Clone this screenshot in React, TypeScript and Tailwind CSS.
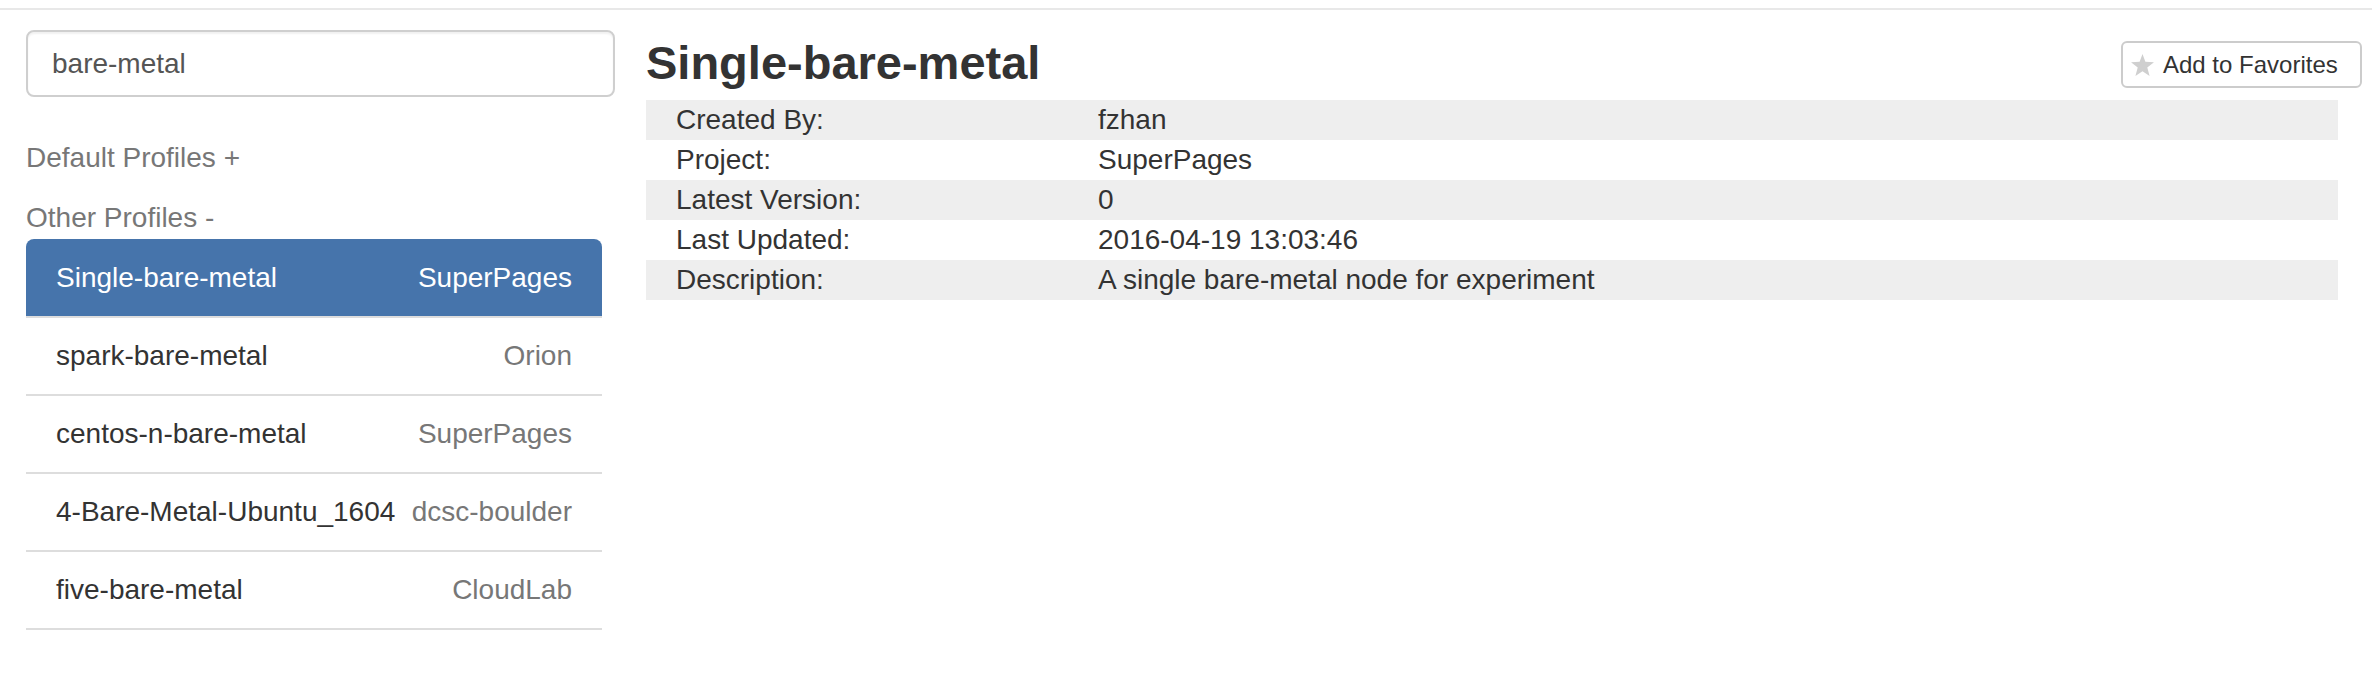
import React from "react";

const profiles = [
  { name: "Single-bare-metal", project: "SuperPages", active: true },
  { name: "spark-bare-metal", project: "Orion" },
  { name: "centos-n-bare-metal", project: "SuperPages" },
  { name: "4-Bare-Metal-Ubuntu_1604", project: "dcsc-boulder" },
  { name: "five-bare-metal", project: "CloudLab" },
];

const details = [
  ["Created By:", "fzhan"],
  ["Project:", "SuperPages"],
  ["Latest Version:", "0"],
  ["Last Updated:", "2016-04-19 13:03:46"],
  ["Description:", "A single bare-metal node for experiment"],
];

function Star() {
  return (
    <svg width="23" height="22" viewBox="0 0 24 23" className="shrink-0">
      <polygon
        points="12,0 15,8.2 24,8.6 17,14.2 19.4,23 12,18 4.6,23 7,14.2 0,8.6 9,8.2"
        fill="#cfcfcf"
      />
    </svg>
  );
}

export default function App() {
  return (
    <div className="min-h-[676px] w-full bg-white font-['Liberation_Sans',Arial,sans-serif] text-[#333]">
      <div className="h-[10px] border-b-2 border-[#e8e8e8]" />

      <div className="flex pl-[26px] pr-[10px]">
        {/* sidebar */}
        <div className="w-[589px] shrink-0">
          <div className="mt-[20px] flex h-[67px] items-center rounded-[8px] border-2 border-[#cfcfcf] px-[24px] text-[28px] text-[#555] shadow-[inset_0_2px_2px_rgba(0,0,0,0.06)]">
            bare-metal
          </div>

          <div className="mt-[41px] text-[28px] leading-[40px] text-[#777]">Default Profiles +</div>
          <div className="mt-[20px] text-[28px] leading-[40px] text-[#777]">Other Profiles -</div>

          <div className="mt-[1px] w-[576px] text-[28px]">
            {profiles.map((p) =>
              p.active ? (
                <div
                  key={p.name}
                  className="flex h-[77px] items-center justify-between rounded-t-[8px] bg-[#4674ab] px-[30px] text-white"
                >
                  <span>{p.name}</span>
                  <span>{p.project}</span>
                </div>
              ) : (
                <div
                  key={p.name}
                  className="flex h-[78px] items-center justify-between gap-[4px] border-t-2 border-[#ddd] px-[30px] last:h-[80px] last:border-b-2"
                >
                  <span className="whitespace-nowrap">{p.name}</span>
                  <span className="whitespace-nowrap text-[#777]">{p.project}</span>
                </div>
              )
            )}
          </div>
        </div>

        {/* detail */}
        <div className="ml-[31px] flex-1">
          <div className="flex items-start justify-between">
            <h1 className="mt-[27px] text-[47px] font-bold leading-[52px] text-[#333]">Single-bare-metal</h1>
            <button className="mt-[31px] flex h-[47px] w-[241px] items-center gap-[9px] rounded-[6px] border-2 border-[#ccc] pl-[8px] text-[24px] text-[#333]">
              <Star />
              <span>Add to Favorites</span>
            </button>
          </div>

          <div className="mt-[11px] mr-[24px] text-[28px] leading-[40px]">
            {details.map(([label, value], i) => (
              <div key={label} className={`grid grid-cols-[452px_1fr] ${i % 2 === 0 ? "bg-[#eee]" : ""}`}>
                <div className="pl-[30px]">{label}</div>
                <div>{value}</div>
              </div>
            ))}
          </div>
        </div>
      </div>
    </div>
  );
}
